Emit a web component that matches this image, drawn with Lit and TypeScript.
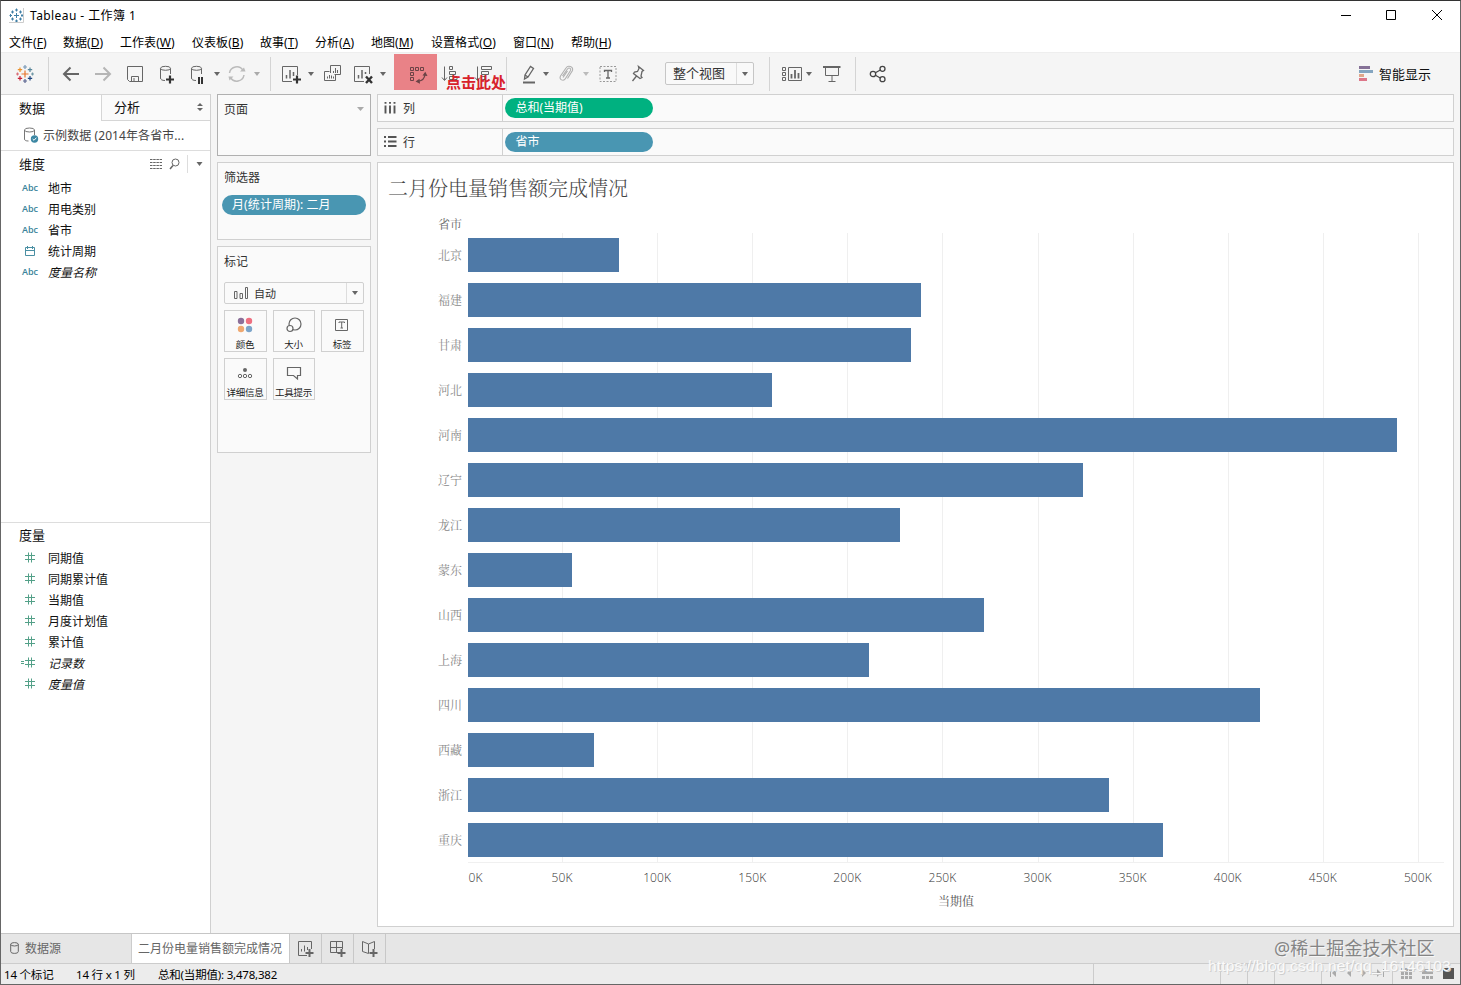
import { LitElement, html, svg, css } from "lit";
import { customElement, property } from "lit/decorators.js";

const carrot = (c = "#666") => svg`<svg width="6" height="4" viewBox="0 0 6 4"><path d="M0 0H6L3 4Z" fill=${c} /></svg>`;

const glyph = (name: string) => {
  switch (name) {
    case "logo":
      return svg`<g fill="none" stroke-width="1.2">
        <path d="M10 6.5V13.5M6.5 10H13.5" stroke="#e8762c" />
        <path d="M10 1V5M8 3H12" stroke="#7a9ab8" /><path d="M10 15V19M8 17H12" stroke="#5b6591" />
        <path d="M5 3.5V8M2.8 5.7H7.2" stroke="#eb912c" /><path d="M15 3.5V8M12.8 5.7H17.2" stroke="#59879b" />
        <path d="M5 12V16.5M2.8 14.3H7.2" stroke="#c72035" /><path d="M15 12V16.5M12.8 14.3H17.2" stroke="#1f457e" />
        <path d="M2.5 8.5V11.5M1 10H4" stroke="#d9707a" /><path d="M17.5 8.5V11.5M16 10H19" stroke="#7199a6" /></g>`;
    case "back":
      return svg`<path d="M18 10H3M9.5 3.5L3 10L9.5 16.5" stroke-width="2" />`;
    case "forward":
      return svg`<path d="M2 10H17M10.500 3.500L17 10L10.500 16.500" stroke-width="2" stroke="#b5b5b5" />`;
    case "save":
      return svg`<path d="M2.500 2.500H17.500V17.500H4.500L2.500 15.500ZM6.500 17V12.500H13.500V17M9 14V17" />`;
    case "dbadd":
      return svg`<path d="M3.500 4.500V14C3.500 15.500 5 16.500 8 16.500M13.500 4.500V10" /><ellipse cx="8.500" cy="4.300" rx="5" ry="2" /><path d="M13 11.500V19.500M9 15.500H17" stroke="#333" stroke-width="2.200" />`;
    case "dbpause":
      return svg`<path d="M3.500 4.500V14C3.500 15.500 5 16.500 8 16.500M13.500 4.500V10" /><ellipse cx="8.500" cy="4.300" rx="5" ry="2" /><path d="M11 13V20M14 13V20" stroke="#333" stroke-width="2" />`;
    case "refresh":
      return svg`<g stroke="#bbb" stroke-width="1.500"><path d="M2.500 9A7.300 7.300 0 0 1 16 6.500M17 11A7.300 7.300 0 0 1 3.500 13.500" /><path d="M13 7.500H18.500L17 3.500ZM1.500 12.500H6.500L2.500 16.500Z" fill="#bbb" stroke="none" /></g>`;
    case "sheet":
      return svg`<path d="M11 17.500H1.500V2.500H16.500V11" /><path d="M5.500 14.500V11M9 14.500V6M12.500 12V8" stroke-width="1.500" /><path d="M16 11.500V19.500M12 15.500H20" stroke="#333" stroke-width="2.200" />`;
    case "clear":
      return svg`<path d="M11 17.500H1.500V2.500H16.500V10" /><path d="M5.500 14.500V11M9 14.500V6M12.500 10V8" stroke-width="1.500" /><path d="M13 12.500L19 19M19 12.500L13 19" stroke="#333" stroke-width="2.400" />`;
    case "dup":
      return svg`<path d="M7.500 9V1.500H17.500V10.500H11.500M6.500 7.500H1.500V16.500H12.500V11" /><path d="M10.500 9V7M12.500 9V4M14.500 9V6M4.500 14.500V12.500M6.500 14.500V11M8.500 14.500V11.500M10.500 14.500V12.500" />`;
    case "swap":
      return svg`<g stroke="#6b4346"><path d="M1.500 3.500H4.500V6.500H1.500ZM6.500 3.500H9.500V6.500H6.500ZM11.500 3.500H14.500V6.500H11.500ZM1.500 8.500H4.500V11.500H1.500ZM1.500 13.500H4.500V16.500H1.500Z" /><path d="M16 10.500C15.500 14.500 13 16.800 9.500 17.200" stroke-width="1.300" /><path d="M16.300 7.800L18.500 12L13.500 11.500ZM6.500 17.500L10.500 14.800L11 19.800Z" fill="#6b4346" stroke="none" /></g>`;
    case "asc":
      return svg`<path d="M4.500 2.500V16M2 13.500L4.500 16.500L7 13.500M9.500 2.500H12.500V5.500H9.500ZM9.500 7.500H15.500V10.500H9.500ZM9.500 12.500H17V15.500H9.500Z" />`;
    case "desc":
      return svg`<path d="M3.500 2.500V16M1 13.500L3.500 16.500L6 13.500M7.500 2.500H17.500V5.500H7.500ZM7.500 7.500H14.500V10.500H7.500ZM7.500 12.500H11V15.500H7.500Z" />`;
    case "pen":
      return svg`<path d="M5.500 15L6 11L11.500 2.500L14.500 4.500L9 13Z M6 11L9 13" stroke-width="1.300" /><path d="M4 18.500H16" stroke-width="2" />`;
    case "clip":
      return svg`<path d="M6.500 12L11.500 5C13 3 15.500 4.500 14.500 6.500L9.500 14.500C7.500 18 2.500 15.500 4.500 12L10 4C12 .8 17.500 2.500 16.500 6.500L11.500 14.500M11.500 7L7 13.500" stroke="#b0b0b0" stroke-width="1.100" />`;
    case "text":
      return svg`<path d="M2 2.500H18V17.500H2Z" stroke="#999" stroke-dasharray="2 1.500" /><path d="M6.500 8V6.500H13.500V8M10 6.500V14M8 14H12" stroke-width="1.300" />`;
    case "pin":
      return svg`<path d="M10.500 2.500L15.500 6.500L14 7.500L13 12L14 13.500L12 14.500L5.500 9.500L6.500 8L9.500 7.500L11 4.500ZM8.500 12L4.500 17" stroke-width="1.300" />`;
    case "cards":
      return svg`<path d="M.5 3.500H3.500V6.500H.5ZM.5 8.500H3.500V11.500H.5ZM.5 13.500H3.500V16.500H.5ZM6.500 3.500H19.500V16.500H6.500Z" /><path d="M9.500 14.500V10M13 14.500V6M16.500 14.500V9" stroke-width="1.800" />`;
    case "present":
      return svg`<path d="M1 3H18.500" stroke-width="2" /><path d="M3.500 3V11.500H16.500V3M10 11.500V17.500M6.500 17.500H13.500" />`;
    case "share":
      return svg`<g stroke="#444" stroke-width="1.300"><circle cx="5" cy="10" r="2.700" /><circle cx="14.500" cy="4.800" r="2.500" /><circle cx="14.500" cy="15.200" r="2.500" /><path d="M7.400 8.700L12.300 6M7.400 11.300L12.300 14" /></g>`;
    case "smart":
      return svg`<g stroke="none"><path d="M4 2H15V5H4Z" fill="#857197" /><path d="M4 6H18V9H4Z" fill="#84a5c0" /><path d="M4 10H9V13H4Z" fill="#e0a78a" /><path d="M4 14H12V17H4Z" fill="#dd7789" /></g>`;
    case "tabsheet":
      return svg`<path d="M11 16.500H2.500V2.500H15.500V10M5.500 12.500V10M8.500 12.500V6.500M11.500 11V8" /><path d="M13.500 10V18M9.500 14H17.500" stroke-width="2" />`;
    case "tabdash":
      return svg`<path d="M11 13.500H2.500V2.500H14.500V10M2.500 8.500H14.500M8.500 2.500V13.500" /><path d="M13.500 10V18M9.500 14H17.500" stroke-width="2" />`;
    case "tabstory":
      return svg`<path d="M8.500 5L2.500 2.500V12.500L8.500 14.500V5L14.500 2.500V10" /><path d="M13.500 10V18M9.500 14H17.500" stroke-width="2" />`;
    case "colour":
      return svg`<g stroke="none"><circle cx="6" cy="6" r="3.200" fill="#8b6f99" /><circle cx="14" cy="6" r="3.200" fill="#ee6f80" /><circle cx="6" cy="14" r="3.200" fill="#efa870" /><circle cx="14" cy="14" r="3.200" fill="#7ba4c9" /></g>`;
    case "size":
      return svg`<circle cx="11" cy="9" r="6" stroke-width="1.200" /><circle cx="6" cy="13.500" r="3" fill="#fafafa" stroke-width="1.200" />`;
    case "label":
      return svg`<path d="M3.500 4.500H15.500V15.500H3.500Z" /><path d="M7 8V7H12.500V8M9.700 7V13M8.500 13H11" />`;
    case "detail":
      return svg`<circle cx="10" cy="7" r="2" fill="#666" stroke="none" /><circle cx="5" cy="13" r="1.700" /><circle cx="10" cy="13" r="1.700" /><circle cx="15" cy="13" r="1.700" />`;
    case "tooltip":
      return svg`<path d="M3.500 4.500H16.500V12.500H13.500V16L9.500 12.500H3.500Z" stroke-width="1.200" />`;
  }
  return svg``;
};

const icon = (name: string) =>
  svg`<svg width="20" height="20" viewBox="0 0 20 20" fill="none" stroke="#666">${glyph(name)}</svg>`;

@customElement("tool-bar")
class ToolBar extends LitElement {
  static styles = css`
    :host {
      display: grid;
      height: 41px;
      padding-left: 14px;
      background: #f5f5f5;
      box-sizing: border-box;
      align-items: center;
      grid-template-columns: 33px 13px 32px 32px 32px 31px 26px 13px 27px 16px 11px 27px 15px 30px 27px 14px 46px 34px 32px 13px 24px 13px 27px 15px 30px 37px 104px 13px 24px 16px 33px 13px 487px auto;
    }
    svg { display: block; }
    .sep { width: 1px; height: 34px; background: #d4d4d4; }
    .swap { width: 43px; height: 36px; margin-top: -4px; background: #e98287; display: flex; align-items: center; justify-content: center; padding: 4px 0 0 7px; box-sizing: border-box; }
    .select { width: 89px; height: 23px; border: 1px solid #c6c6c6; border-radius: 2px; box-sizing: border-box; display: flex; align-items: center; background: #f9f9f9; color: #333; font-size: 13px; }
    .select span { width: 70px; padding-left: 7px; box-sizing: border-box; margin-top: -2px; }
    .arrow { flex: 1; align-self: stretch; border-left: 1px solid #ddd; display: grid; place-items: center; }
    .smart { display: flex; align-items: center; gap: 4px; font-size: 13px; color: #111; white-space: nowrap; }
  `;
  render() {
    const sep = html`<i class="sep"></i>`;
    return html`
      ${icon("logo")}${sep}${["back", "forward", "save", "dbadd", "dbpause"].map(icon)}${carrot()}${icon("refresh")}${carrot("#aaa")}${sep}
      ${icon("sheet")}${carrot()}${icon("dup")}${icon("clear")}${carrot()}
      <div class="swap">${icon("swap")}</div>${icon("asc")}${icon("desc")}${sep}
      ${icon("pen")}${carrot()}${icon("clip")}${carrot("#bbb")}${icon("text")}${icon("pin")}
      <div class="select"><span>整个视图</span><div class="arrow">${carrot()}</div></div>
      ${sep}${icon("cards")}${carrot()}${icon("present")}${sep}${icon("share")}
      <div class="smart">${icon("smart")}<span>智能显示</span></div>
    `;
  }
}

@customElement("data-pane")
class DataPane extends LitElement {
  static styles = css`
    :host { display: flex; flex-direction: column; width: 209px; background: #fff; border-right: 1px solid #d0d0d0; font-size: 12px; color: #111; }
    .tabs { display: flex; height: 27px; box-sizing: border-box; font-size: 13px; }
    .tab { line-height: 26px; border-top: 1px solid #d6d6d6; box-sizing: border-box; }
    .on { width: 100px; padding-left: 18px; }
    .off { flex: 1; border-left: 1px solid #d6d6d6; border-bottom: 1px solid #d6d6d6; background: #fafafa; padding: 0 7px 1px 12px; display: flex; align-items: center; justify-content: space-between; }
    .source { height: 30px; border-bottom: 1px solid #ddd; box-sizing: border-box; display: flex; align-items: center; gap: 4px; padding: 0 0 1px 22px; color: #444; white-space: nowrap; letter-spacing: 0.080px; }
    .head { display: flex; align-items: center; height: 26px; padding-left: 18px; font-size: 13px; }
    .head b { font-weight: 400; width: 130px; margin-top: -1px; }
    .bar { width: 1px; height: 18px; background: #ddd; margin: 0 8px 0 6px; }
    .dims { height: 372px; box-sizing: border-box; border-bottom: 1px solid #ddd; }
    .row { height: 21px; display: flex; align-items: center; }
    .kind { width: 47px; padding-left: 21px; box-sizing: border-box; font: 600 9px "Open Sans", sans-serif; color: #3a839a; display: flex; }
    .num { padding-left: 19px; }
    .cal { padding-left: 24px; }
    .it { font-style: italic; }
    .meas { height: 24px; box-sizing: border-box; }
  `;
  dims = [["abc", "地市"], ["abc", "用电类别"], ["abc", "省市"], ["cal", "统计周期"], ["abc", "度量名称"]];
  nums = ["同期值", "同期累计值", "当期值", "月度计划值", "累计值", "记录数", "度量值"];
  render() {
    return html`
      <div class="tabs">
        <div class="tab on">数据</div>
        <div class="tab off"><span>分析</span><svg width="6" height="8" viewBox="0 0 6 8"><path d="M0 3L3 0L6 3ZM0 5H6L3 8Z" fill="#666" /></svg></div>
      </div>
      <div class="source">
        <svg width="16" height="16" viewBox="0 0 16 16" fill="none" stroke="#777"><ellipse cx="6.500" cy="3" rx="5" ry="2" /><path d="M1.500 3V12C1.500 13.500 3 14 5.500 14M11.500 3V8" /><circle cx="11.500" cy="12" r="3.700" fill="#3c87a3" stroke="none" /><path d="M9.700 12L11 13.300L13.400 10.700" stroke="#fff" /></svg>
        <span>示例数据 (2014年各省市...</span>
      </div>
      <div class="dims">
        <div class="head"><b>维度</b>
          <svg width="32" height="12" viewBox="0 0 32 12" fill="none" stroke="#666"><path d="M1 1.500H13M1 4.500H13M1 7.500H13M1 10.500H13" stroke-dasharray="2.500 .7" /><circle cx="26.500" cy="4.500" r="3.500" /><path d="M24 7.500L21 11" stroke-width="1.500" /></svg>
          <i class="bar"></i><svg width="7" height="4" viewBox="0 0 6 4"><path d="M0 0H6L3 4Z" fill="#666" /></svg>
        </div>
        ${this.dims.map(([k, t], i) => html`<div class="row">
          ${k === "abc"
            ? html`<span class="kind">Abc</span>`
            : html`<span class="kind cal"><svg width="11" height="10" viewBox="0 0 11 10" fill="none" stroke="#4a8fa3"><path d="M.5 1.500H9.500V9.500H.5ZM.5 4.500H9.500M2.500 0V3M7.500 0V3" /></svg></span>`}
          <span class=${i === 4 ? "it" : ""}>${t}</span></div>`)}
      </div>
      <div class="head meas"><b>度量</b></div>
      ${this.nums.map((t, i) => html`<div class="row">
        <span class="kind num"><svg width="16" height="11" viewBox="0 0 16 11" fill="none" stroke="#53a088"><path d="M5 3.500H15M5 7.500H15M8.500 .5V10.500M11.500 .5V10.500" />${i === 5 ? svg`<path d="M1 4.500H4M1 6.500H4" />` : ""}</svg></span>
        <span class=${i > 4 ? "it" : ""}>${t}</span></div>`)}
    `;
  }
}

@customElement("card-column")
class CardColumn extends LitElement {
  static styles = css`
    :host { display: flex; flex-direction: column; width: 154px; margin-left: 6px; font-size: 12px; color: #333; }
    .card { border: 1px solid #d0d0d0; background: #fafafa; box-sizing: border-box; margin-bottom: 6px; }
    .pages { height: 62px; border-color: #b0b0b0; }
    .filters { height: 78px; }
    .marks { height: 207px; margin: 0; }
    .head { height: 28px; padding: 0 6px; display: flex; align-items: center; justify-content: space-between; }
    .pill { margin: 4px; height: 20px; border-radius: 10px; line-height: 19px; background: #4996b2; color: #fff; padding-left: 10px; letter-spacing: 0.100px; }
    .auto { margin: 7px 6px 6px; height: 22px; box-sizing: border-box; border: 1px solid #d0d0d0; border-radius: 2px; display: flex; align-items: center; font-size: 11px; }
    .auto svg { display: block; }
    .auto .name { width: 121px; display: flex; align-items: center; gap: 5px; padding: 0 0 1px 9px; box-sizing: border-box; }
    .arrow { flex: 1; align-self: stretch; border-left: 1px solid #ddd; display: grid; place-items: center; }
    .grid { display: grid; grid-template-columns: 43px 42px 43px; gap: 6px; padding: 0 6px; }
    .cell { height: 42px; border: 1px solid #d0d0d0; box-sizing: border-box; display: flex; flex-direction: column; align-items: center; font-size: 9.500px; line-height: 12px; padding: 4px 1px 0 0; gap: 4px; white-space: nowrap; letter-spacing: -0.300px; color: #222; }
    .cell svg { display: block; flex: none; }
  `;
  render() {
    return html`
      <section class="card pages"><div class="head"><span>页面</span>${svg`<svg width="7" height="4" viewBox="0 0 7 4"><path d="M0 0H7L3.500 4Z" fill="#aaa" /></svg>`}</div></section>
      <section class="card filters"><div class="head">筛选器</div><div class="pill">月(统计周期): 二月</div></section>
      <section class="card marks">
        <div class="head">标记</div>
        <div class="auto">
          <div class="name"><svg width="15" height="13" viewBox="0 0 15 13" fill="none" stroke="#666"><path d="M.5 5.500H3V12.500H.5ZM6 7.500H8.500V12.500H6ZM11.500 1.500H13.500V12.500H11.500Z" /></svg><span>自动</span></div>
          <div class="arrow">${carrot()}</div>
        </div>
        <div class="grid">
          ${[["colour", "颜色"], ["size", "大小"], ["label", "标签"], ["detail", "详细信息"], ["tooltip", "工具提示"]].map(
            ([i, t]) => html`<div class="cell">${icon(i)}<span>${t}</span></div>`
          )}
        </div>
      </section>
    `;
  }
}

@customElement("field-shelf")
class FieldShelf extends LitElement {
  @property() label = "";
  @property() field = "";
  @property({ type: Boolean, reflect: true }) green = false;
  static styles = css`
    :host { display: flex; height: 28px; box-sizing: border-box; border: 1px solid #d0d0d0; background: #fafafa; font-size: 12px; align-items: center; margin-bottom: 6px; color: #333; }
    .name { box-sizing: content-box; width: 118px; align-self: stretch; border-right: 1px solid #d0d0d0; display: flex; align-items: center; gap: 6px; padding-left: 6px; }
    .name svg { margin-top: -2px; }
    .pill { margin: 0 0 1px 2px; width: 148px; height: 20px; border-radius: 10px; box-sizing: border-box; padding-left: 10.500px; line-height: 20px; background: #4996b2; color: #fff; }
    :host([green]) .pill { background: #00b180; }
  `;
  render() {
    const d = this.green
      ? "M1.500 1V2.800M1.500 4.500V12.500M6 1V2.800M6 4.500V12.500M10.500 1V2.800M10.500 4.500V12.500"
      : "M0 2H2M4 2H12.500M0 6.500H2M4 6.500H12.500M0 11H2M4 11H12.500";
    return html`<div class="name"><svg width="13" height="13" viewBox="0 0 13 13"><path d=${d} stroke="#555" stroke-width="1.900" /></svg><span>${this.label}</span></div>
      <div class="pill">${this.field}</div>`;
  }
}

@customElement("bar-chart")
class BarChart extends LitElement {
  static styles = css`
    :host { display: block; height: 765px; box-sizing: border-box; background: #fff; border: 1px solid #d0d0d0; padding: 11px 7px 0 11px; color: #777; font: 12px "Open Sans", "Noto Serif CJK SC", "Noto Sans CJK SC", serif; }
    h1 { margin: 0; height: 28px; font: 300 20px/28px "Noto Serif CJK SC", "Noto Sans CJK SC", serif; color: #444; margin-left: -1px; }
    .field { width: 73px; height: 18px; line-height: 20px; margin-top: 13px; text-align: right; color: #666; font-size: 12px; }
    .plot { display: grid; grid-template-columns: 73px 6px 976px; height: 630px; }
    .name { height: 45px; line-height: 45px; text-align: right; color: #888; }
    .area { grid-column: 3; border-bottom: 1px solid #f0f0f0; box-sizing: border-box; padding-top: 5px; height: 630px; background: repeating-linear-gradient(90deg, transparent 0 94.100px, #efefef 94.100px 95.100px); }
    .bar { height: 34px; margin-bottom: 11px; background: #4e79a7; }
    .ticks { display: flex; padding-left: 31px; height: 30px; line-height: 30px; font-weight: 300; font-size: 12px; color: #333; letter-spacing: 0.100px; }
    .ticks span { width: 95.100px; text-align: center; flex: none; }
    .ticks .zero { text-align: left; padding-left: 48.500px; width: 94.500px; box-sizing: border-box; }
    .axis { padding-left: 79px; width: 976px; text-align: center; line-height: 18px; color: #555; }
  `;
  rows: [string, number][] = [["北京", 151], ["福建", 453], ["甘肃", 443], ["河北", 304], ["河南", 929], ["辽宁", 615], ["龙江", 432], ["蒙东", 104], ["山西", 516], ["上海", 401], ["四川", 792], ["西藏", 126], ["浙江", 641], ["重庆", 695]];
  render() {
    return html`
      <h1>二月份电量销售额完成情况</h1>
      <div class="field">省市</div>
      <div class="plot">
        <div class="names">${this.rows.map(([n]) => html`<div class="name">${n}</div>`)}</div>
        <div class="area">${this.rows.map(([, w]) => html`<div class="bar" style="width:${w}px"></div>`)}</div>
      </div>
      <div class="ticks">${[0, 50, 100, 150, 200, 250, 300, 350, 400, 450, 500].map((k) => html`<span class=${k ? "" : "zero"}>${k}K</span>`)}</div>
      <div class="axis">当期值</div>
    `;
  }
}

@customElement("app-root")
class AppRoot extends LitElement {
  static styles = css`
    :host { display: flex; flex-direction: column; position: relative; width: 1461px; height: 985px; box-sizing: border-box; border: 1px solid #666; border-top-color: #333; background: #f5f5f5; font: 12px/normal "Noto Sans", "Noto Sans CJK SC", sans-serif; color: #000; overflow: hidden; }
    .title { height: 29px; display: flex; align-items: center; background: #fff; padding: 0 0 1px 8px; box-sizing: border-box; flex: none; }
    .title span { flex: 1; padding-left: 6px; letter-spacing: 0.420px; }
    .menu { height: 23px; flex: none; background: #fff; border-bottom: 1px solid #eee; box-sizing: border-box; display: grid; grid-template-columns: 54px 57px 72px 68px 55px 56px 60px 82px 58px 60px; padding: 2px 0 0 8px; align-items: center; white-space: nowrap; letter-spacing: 0.050px; }
    .body { display: flex; height: 839px; flex: none; }
    .main { width: 1077px; margin-left: 6px; }
    .sheets { display: flex; height: 30px; flex: none; background: #e6e6e6; border-top: 1px solid #c6c6c6; box-sizing: border-box; color: #666; line-height: 29px; }
    .src { width: 131px; box-sizing: border-box; border-right: 1px solid #ccc; padding-left: 9px; display: flex; align-items: center; gap: 6px; }
    .src svg { margin-top: -2px; }
    .active { width: 158px; flex: none; background: #fff; padding-left: 6px; box-sizing: border-box; white-space: nowrap; border-right: 1px solid #c8c8c8; }
    .new { width: 32px; border-right: 1px solid #c8c8c8; box-sizing: border-box; display: grid; place-items: center; }
    .new svg { display: block; }
    .status { flex: 1; background: #ececec; border-top: 1px solid #ccc; display: flex; align-items: center; padding-left: 3px; }
    .status span { white-space: nowrap; font-size: 11.500px; letter-spacing: -0.200px; margin-top: -1px; }
    .s1 { width: 72px; } .s2 { width: 82px; } .s3 { flex: 1; }
    .nav { display: block; }
    .hint { position: absolute; left: 445px; top: 71px; font-size: 15px; font-weight: 700; line-height: 20px; color: #d8222b; white-space: nowrap; }
    .mark { position: absolute; white-space: nowrap; }
    .m1 { left: 1273px; top: 934px; font-size: 18px; line-height: 26px; color: #858585; text-shadow: 1px 1px 0 #f7f7f7; letter-spacing: 0.050px; }
    .m2 { left: 1207px; top: 954px; font: 15.500px/22px "Liberation Sans", sans-serif; letter-spacing: 0.150px; color: #fafafa; text-shadow: 1px 1px 0 #cfcfcf; }
  `;
  menus = [["文件", "F"], ["数据", "D"], ["工作表", "W"], ["仪表板", "B"], ["故事", "T"], ["分析", "A"], ["地图", "M"], ["设置格式", "O"], ["窗口", "N"], ["帮助", "H"]];
  render() {
    return html`
      <div class="title">
        <svg width="15" height="15" viewBox="0 0 15 15" fill="none" stroke="#3f7fa5"><path d="M0 14.500H14.500V0" stroke="#ccc" /><path d="M7.500 5V10M5 7.500H10M7.500 .5V3.500M6 2H9M7.500 11.500V14M6 13H9M3.500 2.500V5.500M2 4H5M11.500 2.500V5.500M10 4H13M3.500 9.500V12.500M2 11H5M11.500 9.500V12.500M10 11H13M1.500 6V9M.5 7.500H3M13 6V9M12 7.500H14" /></svg>
        <span>Tableau - 工作簿 1</span>
        <svg width="119" height="12" viewBox="0 0 119 12" fill="none" stroke="#000"><path d="M0 6.500H10M45.500 1.500H54.500V10.500H45.500ZM91 1L101 11M101 1L91 11" /></svg>
      </div>
      <div class="menu">${this.menus.map(([t, k]) => html`<span>${t}(<u>${k}</u>)</span>`)}</div>
      <tool-bar></tool-bar>
      <div class="body">
        <data-pane></data-pane>
        <card-column></card-column>
        <div class="main">
          <field-shelf label="列" field="总和(当期值)" green></field-shelf>
          <field-shelf label="行" field="省市"></field-shelf>
          <bar-chart></bar-chart>
        </div>
      </div>
      <div class="sheets">
        <div class="src"><svg width="9" height="12" viewBox="0 0 9 12" fill="none" stroke="#666"><ellipse cx="4.500" cy="2.300" rx="3.800" ry="1.700" /><path d="M.7 2.300V9.500C.7 12 8.300 12 8.300 9.500V2.300" /></svg>数据源</div>
        <div class="active">二月份电量销售额完成情况</div>
        ${["tabsheet", "tabdash", "tabstory"].map((n) => html`<div class="new">${icon(n)}</div>`)}
      </div>
      <div class="status">
        <span class="s1">14 个标记</span><span class="s2">14 行 x 1 列</span><span class="s3">总和(当期值): 3,478,382</span>
        <svg class="nav" width="368" height="20" viewBox="0 0 368 20" fill="none">
          <path d="M1.500 0V20M128.500 0V20M155.500 0V20M182.500 0V20M229.500 0V20M300.500 0V20" stroke="#ccc" />
          <path d="M238.500 5V13M291.500 5V13M280 9H286" stroke="#aaa" /><path d="M244 5V13L240 9ZM259 5V13L255 9ZM270 5V13L274 9ZM285 5V13L289 9Z" fill="#aaa" />
          <path d="M309 5.500H320M309 9.500H320M309 13.500H320" stroke="#aaa" stroke-width="3" stroke-dasharray="3 1" />
          <path d="M330 5H341V10H330Z" fill="#aaa" /><path d="M330 13.500H341" stroke="#aaa" stroke-width="3" stroke-dasharray="3 1" />
          <path d="M351 4H362V15H351Z" fill="#555" />
        </svg>
      </div>
      <div class="hint">点击此处</div>
      <div class="mark m1">@稀土掘金技术社区</div>
      <div class="mark m2">https://blog.csdn.net/qq_16146103</div>
    `;
  }
}
